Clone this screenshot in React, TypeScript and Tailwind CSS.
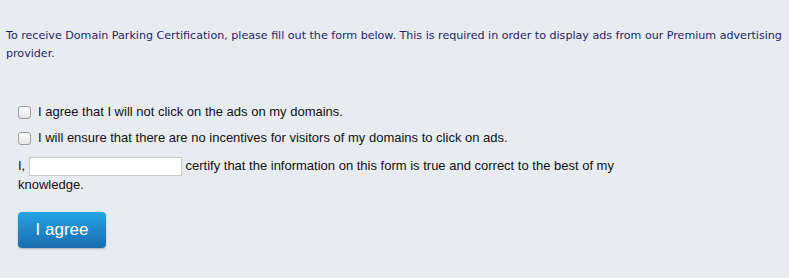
export default function App() {
  return (
    <div className="min-h-[278px] bg-[#e8ecf0] pt-[27px]">
      <p className="px-[6px] text-[11.1px] leading-[18px] text-[#1c1f6b] [font-family:'DejaVu_Sans',Verdana,sans-serif]">
        To receive Domain Parking Certification, please fill out the form below. This is required in order to display ads from our Premium advertising provider.
      </p>

      <form className="mt-[40px] w-[622px] pl-[18px] text-[13px] leading-[18px] text-[#111] [font-family:'Liberation_Sans',Arial,sans-serif]">
        <label className="flex items-center gap-[7px]">
          <input
            type="checkbox"
            className="h-[13px] w-[13px] appearance-none rounded-[3px] border border-[#9a9a9a] bg-gradient-to-b from-white to-[#e4e4e4]"
          />
          I agree that I will not click on the ads on my domains.
        </label>
        <label className="mt-[8px] flex items-center gap-[7px]">
          <input
            type="checkbox"
            className="h-[13px] w-[13px] appearance-none rounded-[3px] border border-[#9a9a9a] bg-gradient-to-b from-white to-[#e4e4e4]"
          />
          I will ensure that there are no incentives for visitors of my domains to click on ads.
        </label>
        <p className="mt-[10px]">
          I,{" "}
          <input
            type="text"
            className="h-[19px] w-[153px] border border-[#c8c8c8] bg-white align-middle"
          />{" "}
          certify that the information on this form is true and correct to the best of my knowledge.
        </p>
        <button
          type="button"
          className="mt-[18px] h-[36px] w-[88px] rounded-[4px] bg-gradient-to-b from-[#22a3e3] to-[#1c6db0] text-[17px] text-white shadow-[0_1px_2px_rgba(0,0,0,0.25)] [font-family:'Liberation_Sans',Arial,sans-serif]"
        >
          I agree
        </button>
      </form>
    </div>
  );
}
